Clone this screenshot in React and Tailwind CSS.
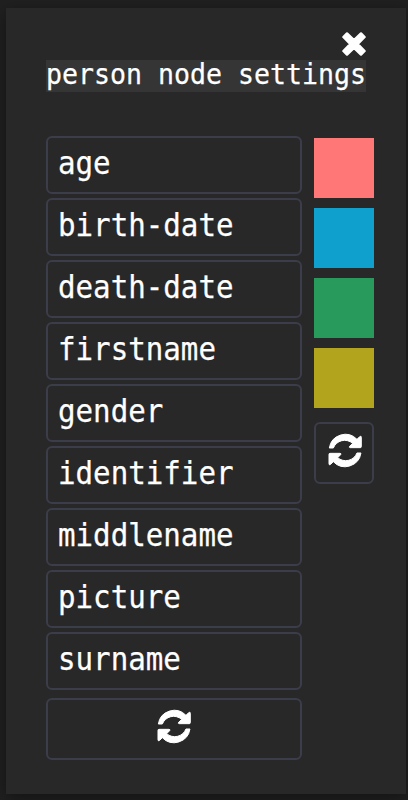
const fields = ['age', 'birth-date', 'death-date', 'firstname', 'gender', 'identifier', 'middlename', 'picture', 'surname'];
const swatches = ['bg-[#ff7777]', 'bg-[#0fa0ce]', 'bg-[#289b5c]', 'bg-[#b3a41e]'];

function CloseIcon() {
  return (
    <svg viewBox="0 0 24 24" className="size-6 shrink-0" fill="currentColor" stroke="currentColor" strokeWidth="2.4" strokeLinejoin="round" aria-hidden="true">
      <path d="M5 1.4 12 8.2 19 1.4 22.6 5 15.8 12 22.6 19 19 22.6 12 15.8 5 22.6 1.4 19 8.2 12 1.4 5Z" />
    </svg>
  );
}

const arrow = 'M4 45A48.5 48.5 0 0 1 87 19L95 11Q100 7 100 13V41Q100 44 97 44H67Q62 43 65 40L74 31A36.5 36.5 0 0 0 16 45Z';

function RefreshIcon() {
  return (
    <svg viewBox="0 0 103 105" className="h-[35px] w-[34.3px]" fill="currentColor" stroke="currentColor" strokeWidth="3" strokeLinejoin="round" aria-hidden="true">
      <path d={arrow} />
      <path d={arrow} transform="rotate(180 51.5 52.5)" />
    </svg>
  );
}

export default function App() {
  return (
    <div className="h-[800px] w-[408px] overflow-hidden bg-[#202020] pl-[6px] pr-[2px] pt-2 font-['DejaVu_Sans_Mono',monospace] text-white">
      <section className="h-[786px] w-[400px] bg-[#282828] pl-10 pt-6 shadow-[0_4px_16px_rgba(0,0,0,0.4)]">
        <header className="w-[320px]">
          <button aria-label="Close" className="ml-auto mr-0 flex h-7 w-6 items-start justify-center">
            <CloseIcon />
          </button>
          <h1 className="h-8 w-[320px] bg-[#353535]">
            <span className="block origin-left scale-x-[0.9165] whitespace-pre text-[29px] leading-[29px] [-webkit-text-stroke:0.25px_white]">person node settings</span>
          </h1>
        </header>
        <div className="mt-11 flex gap-3">
          <div className="flex w-64 flex-col gap-1">
            {fields.map((name) => (
              <div key={name} className="h-[58px] rounded-[6px] border-2 border-[#3c3d4b] pl-[10px]">
                <span className="block origin-left scale-x-[0.911] whitespace-pre text-[32px] leading-[50px] [-webkit-text-stroke:0.25px_white]">{name}</span>
              </div>
            ))}
            <button aria-label="Reset fields" className="mt-1 flex h-[62px] items-center justify-center rounded-[6px] border-2 border-[#3c3d4b] pb-[5px]">
              <RefreshIcon />
            </button>
          </div>
          <div className="flex w-[60px] flex-col gap-[10px] pt-[2px]">
            {swatches.map((color) => (
              <div key={color} className={`h-[60px] ${color}`} />
            ))}
            <button aria-label="Reset color" className="mt-1 flex h-[62px] items-center justify-center rounded-[6px] border-2 border-[#3c3d4b] pb-[5px] pl-[2px]">
              <RefreshIcon />
            </button>
          </div>
        </div>
      </section>
    </div>
  );
}
